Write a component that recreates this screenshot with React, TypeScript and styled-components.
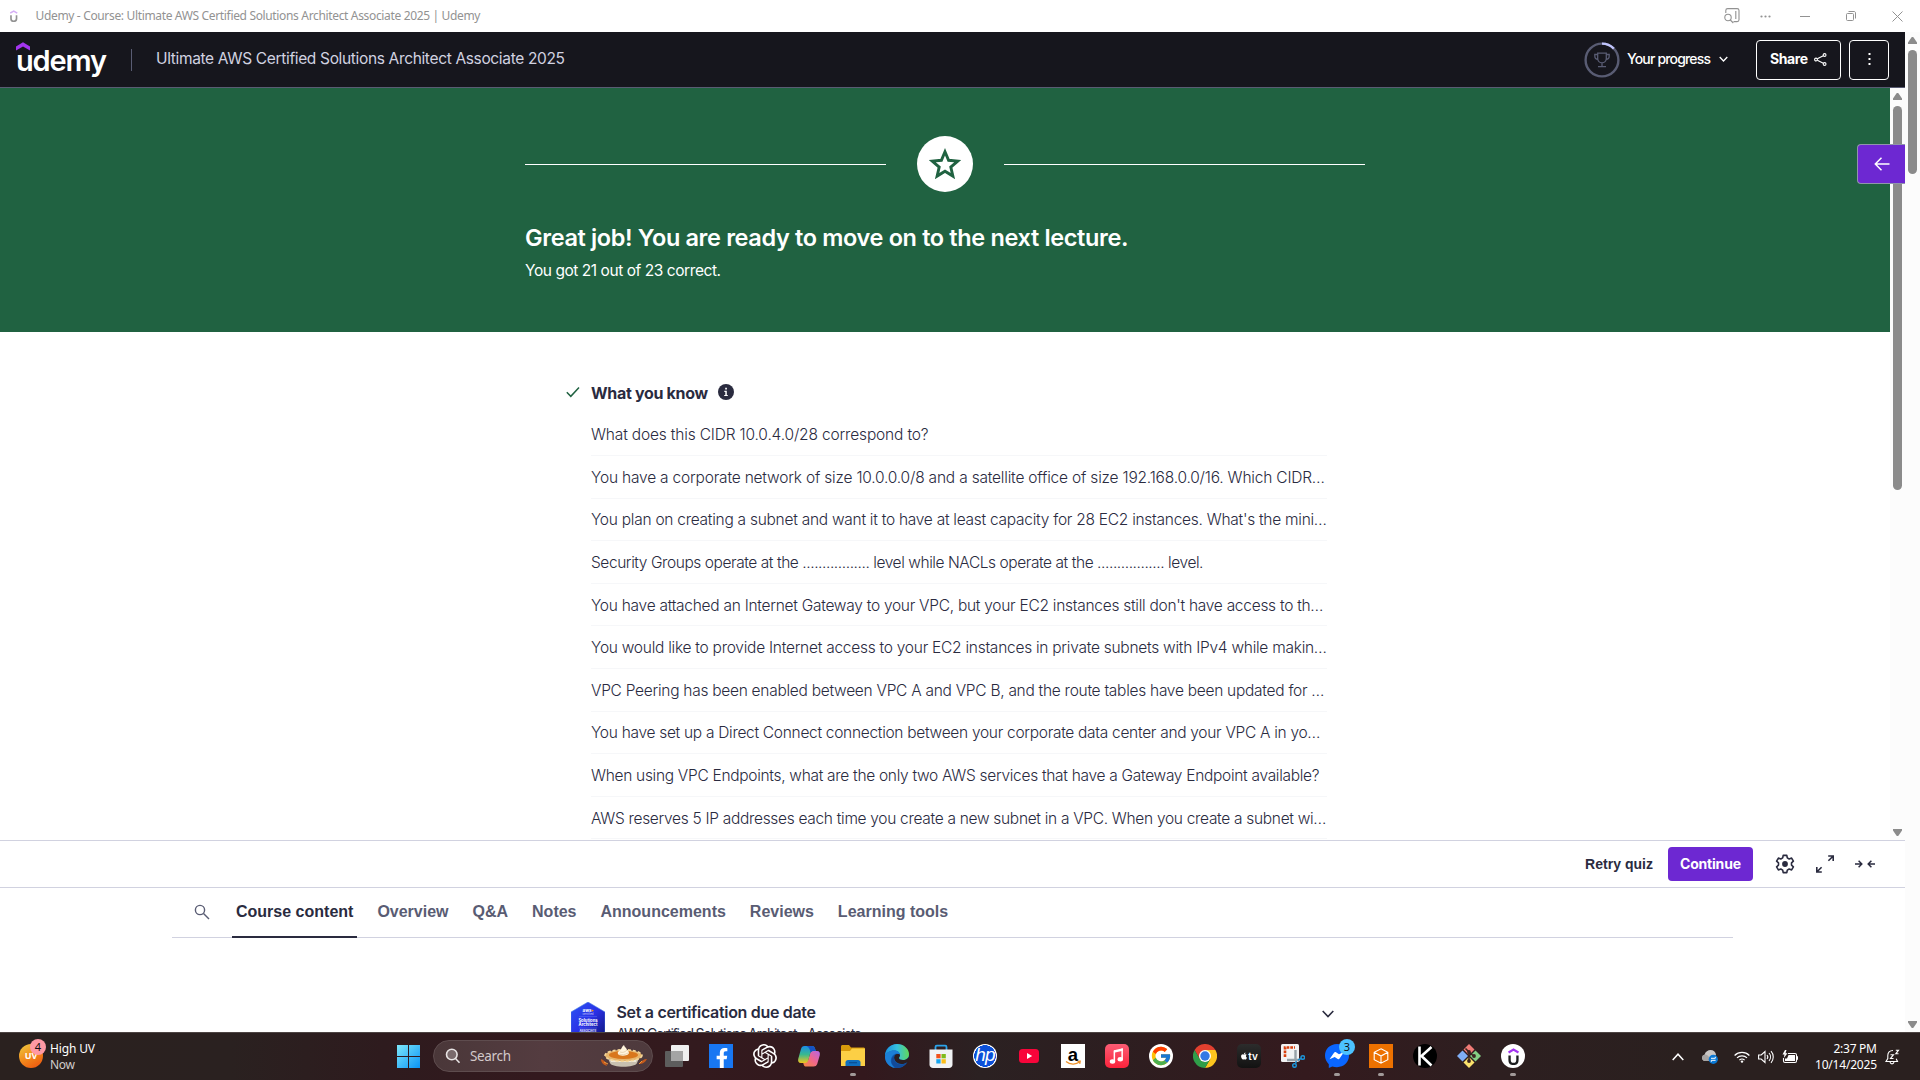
import React, { useLayoutEffect, useRef, useState } from "react";
import styled, { createGlobalStyle } from "styled-components";
import { SiOpenai } from "react-icons/si";
import { FcGoogle } from "react-icons/fc";
import { FaApple, FaFacebookF } from "react-icons/fa";

const ui = `Inter, "Liberation Sans", sans-serif`;
const arial = `"Liberation Sans", Arial, sans-serif`;
const system = `"Noto Sans", "Open Sans", sans-serif`;

const GlobalStyle = createGlobalStyle`
  *, *::before, *::after { box-sizing: border-box; }
  html, body { margin: 0; padding: 0; background: #fff; overflow: hidden; }
  body { font-family: ${ui}; color: #2a2b3f; }
  svg { display: block; flex: none; }
`;

/* ---------- text with an exact measure ---------- */

const Measure = styled.span<{ $w: number }>`
  display: block;
  flex: none;
  width: ${(p) => p.$w}px;
  white-space: nowrap;
`;

function Fit({ w, children }: { w: number; children: string }) {
  const ref = useRef<HTMLSpanElement>(null);
  const [spacing, setSpacing] = useState(0);
  useLayoutEffect(() => {
    if (!ref.current) return;
    const natural = ref.current.getBoundingClientRect().width;
    setSpacing((w - natural) / (children.length - 1));
  }, [w, children]);
  return (
    <Measure $w={w}>
      <span ref={ref} style={{ letterSpacing: `${spacing}px` }}>
        {children}
      </span>
    </Measure>
  );
}

/* ---------- frame ---------- */

const Desktop = styled.div`
  width: 1920px;
  height: 1080px;
  display: flex;
  flex-direction: column;
  overflow: hidden;
  background: #fff;
`;

const TitleBar = styled.div`
  height: 32px;
  flex: none;
  display: flex;
  align-items: center;
  padding: 0 17px 0 10px;
  color: #929292;
  font: 400 12px/16px ${system};
`;
const WindowTitle = styled.div`
  margin-left: 18px;
  flex: 1;
`;
const WindowButtons = styled.div`
  display: flex;
  align-items: center;
`;
const WindowButton = styled.div<{ $gap: number }>`
  margin-left: ${(p) => p.$gap}px;
`;

const Browser = styled.div`
  height: 1000px;
  flex: none;
  display: flex;
`;
const Page = styled.div`
  width: 1905px;
  height: 1000px;
  display: flex;
  flex-direction: column;
  position: relative;
  overflow: hidden;
`;

const Scrollbar = styled.div`
  width: 15px;
  flex: none;
  height: 100%;
  background: #fcfcfc;
  display: flex;
  flex-direction: column;
  align-items: center;
  padding: 5px 0 4px;
`;
const Thumb = styled.div<{ $h: number }>`
  width: 9px;
  height: ${(p) => p.$h}px;
  margin-top: 6px;
  border-radius: 5px;
  background: #8b8b8b;
`;
const Spacer = styled.div`
  flex: 1;
`;

/* ---------- course header ---------- */

const Header = styled.header`
  height: 56px;
  flex: none;
  background: #16161d;
  border-bottom: 1px solid #595c73;
  display: flex;
  align-items: center;
  padding: 0 16px;
`;
const Logo = styled.div`
  width: 91px;
  height: 37px;
  margin-top: 1px;
  display: flex;
  flex-direction: column;
  color: #fff;
`;
const Wordmark = styled.div`
  margin-top: -7px;
  font: 600 29px/34px ${ui};
`;
const Divider = styled.div`
  width: 1px;
  height: 22px;
  margin: 0 24px 0 24px;
  background: #595c73;
`;
const CourseTitle = styled.div`
  flex: 1;
  margin-top: -1px;
  font: 400 15.5px/24px ${ui};
  color: #d1d2e0;
`;
const Progress = styled.div`
  display: flex;
  align-items: center;
  color: #fff;
  font: 500 14px/20px ${ui};
  margin-right: 28px;
`;
const ProgressLabel = styled.div`
  margin: -1px 8px 0 7px;
`;
const HeaderButton = styled.div<{ $w: number }>`
  width: ${(p) => p.$w}px;
  height: 40px;
  border: 1px solid #fff;
  border-radius: 4px;
  display: flex;
  align-items: center;
  justify-content: center;
  gap: 6px;
  color: #fff;
  font: 700 14px/20px ${ui};
  margin-right: 8px;
  padding-bottom: 1px;
  &:last-child { margin-right: 0; }
`;

/* ---------- quiz result ---------- */

const QuizArea = styled.div`
  height: 752px;
  flex: none;
  display: flex;
`;
const QuizScroll = styled.div`
  width: 1890px;
  overflow: hidden;
`;
const Banner = styled.div`
  height: 244px;
  background: #206241;
  color: #fff;
  padding: 48px 525px 0;
`;
const StarRow = styled.div`
  display: flex;
  align-items: center;
  justify-content: space-between;
  height: 56px;
`;
const Rule = styled.div`
  width: 361px;
  height: 1px;
  background: #fff;
`;
const StarDisc = styled.div`
  width: 56px;
  height: 56px;
  border-radius: 50%;
  background: #fff;
  display: grid;
  place-items: center;
`;
const BannerTitle = styled.h2`
  margin: 30px 0 0;
  font: 600 23.5px/32px ${ui};
`;
const BannerText = styled.p`
  margin: 4px 0 0;
  font: 400 15.5px/26px ${ui};
`;
const Known = styled.section`
  padding: 47px 0 0 566px;
`;
const KnownHead = styled.div`
  display: flex;
  align-items: center;
  height: 26px;
  font: 700 16px/26px ${ui};
`;
const KnownLabel = styled.div`
  margin: 1px 10px 0 11px;
`;
const QuestionList = styled.ul`
  list-style: none;
  margin: 8.4px 0 0 25px;
  padding: 0;
  width: 736px;
`;
const Question = styled.li`
  height: 42.6px;
  padding: 8.8px 0 0;
  border-bottom: 1px solid #f6f7f9;
  font: 300 15.5px/25.6px ${ui};
`;

const DrawerButton = styled.div`
  position: absolute;
  right: 0;
  top: 112px;
  width: 48px;
  height: 40px;
  background: #6d28d2;
  border: 1px solid #9194ac;
  border-right: 0;
  border-radius: 4px 0 0 4px;
  display: grid;
  place-items: center;
`;

/* ---------- control bar and tabs ---------- */

const ControlBar = styled.div`
  height: 48px;
  flex: none;
  border-top: 1px solid #d1d2e0;
  border-bottom: 1px solid #d1d2e0;
  display: flex;
  align-items: center;
  justify-content: flex-end;
  padding-right: 30px;
`;
const Retry = styled.div`
  font: 700 14px/20px ${arial};
  margin-right: 15px;
`;
const ContinueButton = styled.div`
  width: 85px;
  height: 34px;
  border-radius: 4px;
  background: #6d28d2;
  color: #fff;
  display: flex;
  align-items: center;
  justify-content: center;
  font: 700 14px/20px ${ui};
  margin-right: 22px;
`;
const ControlIcon = styled.div`
  width: 20px;
  margin-right: 20px;
  &:last-child { margin-right: 0; }
`;

const TabBar = styled.nav`
  margin: 0 172px;
  height: 50px;
  flex: none;
  border-bottom: 1px solid #d1d2e0;
  display: flex;
  padding-left: 22px;
  font: 700 16px/24px ${arial};
`;
const TabSearch = styled.div`
  width: 38px;
  padding-top: 16px;
`;
const Tab = styled.div<{ $active?: boolean }>`
  height: 50px;
  padding: 12px 4px 0;
  margin-right: 16px;
  color: ${(p) => (p.$active ? "#2a2b3f" : "#595c73")};
  border-bottom: 2px solid ${(p) => (p.$active ? "#2a2b3f" : "transparent")};
`;

const CertRow = styled.div`
  margin: 64px 0 0 571px;
  width: 763px;
  display: flex;
`;
const CertText = styled.div`
  margin-left: 11.5px;
  flex: 1;
`;
const CertTitle = styled.div`
  margin-top: -1px;
  font: 600 16px/22px ${ui};
`;
const CertSub = styled.div`
  margin-top: 1px;
  font: 400 14px/20px ${ui};
`;
const CertChevron = styled.div`
  padding-top: 8px;
`;

/* ---------- taskbar ---------- */

const Taskbar = styled.footer`
  height: 48px;
  flex: none;
  border-top: 1px solid #4d4443;
  background: linear-gradient(90deg, #2a211f 0%, #2a2120 12%, #2e1b1e 20%, #33191e 28%, #331a1e 36%, #33181d 45%, #2b2122 51%, #2d1e20 58%, #341a1e 68%, #2d1f20 78%, #2a201f 88%, #2a201f 100%);
  display: flex;
  align-items: center;
  color: #fff;
  font: 400 12px/16px ${system};
`;
const Weather = styled.div`
  width: 397px;
  padding-left: 19px;
  display: flex;
  align-items: center;
`;
const WeatherText = styled.div`
  margin-left: 3px;
`;
const Dim = styled.div`
  color: #d0cccb;
`;
const SearchPill = styled.div`
  width: 220px;
  height: 32px;
  margin: -1px 2px 0 13px;
  border-radius: 16px;
  border: 1px solid #5e4c4e;
  background: linear-gradient(90deg, #4a3739, #543c40 50%, #4e3a3d);
  display: flex;
  align-items: center;
  padding: 0 5px 0 11px;
  font-size: 13.5px;
  color: #d3c9ca;
`;
const SearchLabel = styled.div`
  margin-left: 9px;
  flex: 1;
`;
const Apps = styled.div`
  display: flex;
`;
const AppCell = styled.div<{ $open?: boolean }>`
  width: 44px;
  height: 47px;
  display: flex;
  flex-direction: column;
  align-items: center;
  padding-top: 11px;
  &::after {
    content: "";
    width: 6px;
    height: 3px;
    margin-top: 5px;
    border-radius: 2px;
    background: ${(p) => (p.$open ? "#a19a99" : "transparent")};
  }
`;
const Tile = styled.div<{ $bg: string; $r?: number }>`
  position: relative;
  width: 24px;
  height: 24px;
  border-radius: ${(p) => p.$r ?? 0}px;
  background: ${(p) => p.$bg};
  display: flex;
  align-items: center;
  justify-content: center;
  color: #fff;
`;
const FacebookGlyph = styled(FaFacebookF)`
  margin: 4px 0 0 2px;
`;
const HpText = styled.span`
  font: italic 400 19px/22px ${arial};
  letter-spacing: -0.8px;
  margin-top: -3px;
`;
const TvText = styled.span`
  font: 600 10px/12px ${ui};
`;
const Badge = styled.div`
  position: absolute;
  left: 14px;
  top: -5px;
  width: 16px;
  height: 16px;
  border-radius: 50%;
  background: #4cc2ff;
  color: #111;
  text-align: center;
  font: 400 11px/16px ${system};
`;
const UvIcon = styled.div`
  position: relative;
  width: 28px;
  height: 24px;
  margin-top: -1px;
`;
const UvDisc = styled.div`
  width: 24px;
  height: 24px;
  border-radius: 50%;
  background: linear-gradient(150deg, #eebf3a 10%, #f28a1c 50%, #ee5a10 90%);
  font: 700 9px/24px ${system};
  text-align: center;
`;
const UvBadge = styled(Badge)`
  left: 11px;
  background: #ff99a4;
`;
const Tray = styled.div`
  flex: 1;
  display: flex;
  align-items: center;
  justify-content: flex-end;
  padding-right: 20px;
`;
const TrayItem = styled.div<{ $gap: number }>`
  margin-right: ${(p) => p.$gap}px;
`;
const Clock = styled.div`
  display: flex;
  flex-direction: column;
  align-items: flex-end;
  margin: 0 8px 0 17px;
`;

/* ---------- drawings ---------- */

const Triangle = ({ down = false }: { down?: boolean }) => (
  <svg width="9" height="7" viewBox="0 0 9 7">
    <path d={down ? "M0 0h9v1.5L5.8 6.3a1.5 1.5 0 0 1-2.6 0L0 1.5z" : "M0 7h9V5.5L5.8.7a1.5 1.5 0 0 0-2.6 0L0 5.5z"} fill="#8b8b8b" />
  </svg>
);

const Chevron = ({ w = 10, color = "#fff", up = false, sw = 1.3 }: { w?: number; color?: string; up?: boolean; sw?: number }) => (
  <svg width={w} height={w / 2 + 2} viewBox={`0 0 ${w} ${w / 2 + 2}`} fill="none" stroke={color} strokeWidth={sw}>
    <path d={up ? `M.7 ${w / 2 + 1}L${w / 2} 1.2l${w / 2 - 0.7} ${w / 2 - 0.2}` : `M.7 1l${w / 2 - 0.7} ${w / 2 - 0.5}L${w - 0.7} 1`} />
  </svg>
);

const ProgressRing = () => (
  <svg width="36" height="36" viewBox="0 0 36 36" fill="none">
    <circle cx="18" cy="18" r="16.4" stroke="#595c73" strokeWidth="2.4" />
    <path d="M18 1.6A16.4 16.4 0 0 1 29.8 6.6" stroke="#c0c4fc" strokeWidth="2.4" />
    <g stroke="#595c73" strokeWidth="1.3">
      <path d="M13.7 11.2h8.6v5.3a4.3 4.3 0 0 1-8.6 0zM13.7 12.5h-2.9v1.4c0 2 1.2 3.3 3.3 3.6M22.3 12.5h2.9v1.4c0 2-1.2 3.3-3.3 3.6M18 21v3.6M14 24.6h8" />
    </g>
  </svg>
);

const ShareIcon = () => (
  <svg width="13" height="13" viewBox="0 0 13 13" fill="none" stroke="#fff" strokeWidth="1.1">
    <circle cx="2" cy="6.5" r="1.4" />
    <circle cx="10.6" cy="2" r="1.4" />
    <circle cx="10.6" cy="11" r="1.4" />
    <path d="M3.3 5.8l6-3.1M3.3 7.2l6 3.1" />
  </svg>
);

const Gear = () => (
  <svg width="20" height="20" viewBox="0 0 20 20" fill="none" stroke="#2a2b3f" strokeWidth="1.6" strokeLinejoin="round">
    <path d="M8.2 1.4h3.6l.5 2.5 1.9 1.1 2.4-.9 1.8 3.1-1.9 1.7v2.2l1.9 1.7-1.8 3.1-2.4-.9-1.9 1.1-.5 2.5H8.2l-.5-2.5L5.8 15l-2.4.9-1.8-3.1 1.9-1.7V8.9L1.6 7.2l1.8-3.1 2.4.9 1.9-1.1z" />
    <circle cx="10" cy="10" r="2.9" fill="#2a2b3f" stroke="none" />
  </svg>
);
const Expand = () => (
  <svg width="20" height="20" viewBox="0 0 20 20" fill="none" stroke="#2a2b3f" strokeWidth="1.6">
    <path d="M13.2 2h5v5M18 2.2l-4.6 4.6M1.8 13v5h5M2 17.8l4.6-4.6" />
  </svg>
);
const Collapse = () => (
  <svg width="20" height="20" viewBox="0 0 20 20" fill="none" stroke="#2a2b3f" strokeWidth="1.5">
    <path d="M0 10h6.6M3.6 6.8L6.8 10l-3.2 3.2M20 10h-6.6M16.4 6.8L13.2 10l3.2 3.2" />
  </svg>
);

const CertBadge = () => (
  <svg width="34" height="38" viewBox="0 0 34 38">
    <defs>
      <linearGradient id="cert" x1="0" y1="0" x2="1" y2="1">
        <stop offset="0" stopColor="#2b56f5" />
        <stop offset=".5" stopColor="#2a30e6" />
        <stop offset="1" stopColor="#0d1370" />
      </linearGradient>
    </defs>
    <path d="M17 0l17 10v20L17 38 0 30V10z" fill="url(#cert)" stroke="#4b7fe0" strokeWidth=".6" />
    <g fill="#fff" fontFamily="Inter, sans-serif" textAnchor="middle">
      <text x="16" y="10" fontSize="4.5" fontWeight="700">aws</text>
      <text x="17" y="13.4" fontSize="2.8" opacity=".7">certified</text>
      <text x="17" y="19.8" fontSize="4.2" fontWeight="700">Solutions</text>
      <text x="17" y="24" fontSize="4.2" fontWeight="700">Architect</text>
      <text x="17" y="30.2" fontSize="3" fontWeight="600">ASSOCIATE</text>
    </g>
    <path d="M8 14.6h18M8 26h18" stroke="#6f86ff" strokeWidth=".4" />
    <circle cx="21.6" cy="8.6" r=".9" fill="#f90" />
  </svg>
);

const WindowsLogo = () => (
  <svg width="23" height="23" viewBox="0 0 23 23">
    <defs>
      <linearGradient id="win" x1="0" y1="0" x2="1" y2="1">
        <stop offset="0" stopColor="#7de8fb" />
        <stop offset="1" stopColor="#0a93f5" />
      </linearGradient>
    </defs>
    <path d="M0 0h11v11H0zM12 0h11v11H12zM0 12h11v11H0zM12 12h11v11H12z" fill="url(#win)" />
  </svg>
);

const Pie = () => (
  <svg width="47" height="23" viewBox="0 0 47 23">
    <path d="M1 14c3 1 5 3 6 7-3-1-6-3-6-7zM47 14c-3 0-6 2-8 5 3 0 6-1 8-5z" fill="#c45a1c" />
    <path d="M4 17l4 2M42 16l-3 3" stroke="#f19a3c" />
    <path d="M7 11h33l-3 7c-2 5-25 5-27 0z" fill="#c8c0b0" />
    <path d="M10 14h27l-1 3H11z" fill="#efe8d6" />
    <ellipse cx="23.5" cy="10.5" rx="18.5" ry="5.8" fill="#e6b56c" />
    <ellipse cx="23.5" cy="10.5" rx="18.5" ry="5.8" fill="none" stroke="#f6d79a" strokeWidth="1.6" strokeDasharray="3 2" />
    <ellipse cx="23.5" cy="10" rx="14.5" ry="4" fill="#d9771c" />
    <path d="M18 9c-1-3 2-3 3-5 1-1 1-3 3-4 0 2 3 3 3 5 2 1 3 4 0 5-3 1-8 1-9-1z" fill="#fff4dc" />
    <path d="M20 7c3 1 5 0 7-2M19 9c3 1 6 1 9-1" stroke="#dfc7a0" strokeWidth=".7" fill="none" />
  </svg>
);

const TaskView = () => (
  <svg width="24" height="24" viewBox="0 0 24 24">
    <rect x="6" y="1" width="18" height="16" rx="1" fill="#efefef" />
    <rect x="0" y="7" width="18" height="16" rx="1" fill="#5d5d5d" />
    <path d="M6 7h12v10H6z" fill="#a4a4a4" />
  </svg>
);

const Copilot = () => (
  <svg width="24" height="24" viewBox="0 0 24 24">
    <defs>
      <linearGradient id="cpA" x1="0" y1="0" x2="0" y2="1">
        <stop offset="0" stopColor="#1a8de8" />
        <stop offset=".5" stopColor="#38b98f" />
        <stop offset="1" stopColor="#f2c51c" />
      </linearGradient>
      <linearGradient id="cpB" x1="1" y1="0" x2="0" y2="1">
        <stop offset="0" stopColor="#b565e8" />
        <stop offset=".5" stopColor="#f0668c" />
        <stop offset="1" stopColor="#f58b3c" />
      </linearGradient>
    </defs>
    <path d="M16.5 22.500h-7c-2 0-2.600-1-3-2.600L6 18h2c2 0 3-1 3.500-3l1.600-5.500c.6-2 1.500-2.500 3.500-2.500H20c2.500 0 3.400 2 2.700 4.500l-2.500 8.500c-.7 1.700-1.700 2.500-3.700 2.500z" fill="url(#cpB)" />
    <path d="M7.500 2h7.500c2 0 2.500 1 3 2.600l.8 2.400h-2.300c-2 0-3 1-3.500 3l-1.600 6c-.6 2-1.500 3-3.500 3H4c-2.500 0-3.400-2-2.700-4.500l2.700-9.500C4.600 3 5.500 2 7.500 2z" fill="url(#cpA)" />
    <path d="M9.500 2H15c2 0 2.500 1 3 2.600l.8 2.400h-2.300c-1.500 0-2.500.6-3 1.500-.5-3-1.500-5.500-4-6.500z" fill="#1552c4" />
  </svg>
);

const Folder = () => (
  <svg width="24" height="24" viewBox="0 0 24 24">
    <path d="M0 2.500C0 1.700.6 1 1.500 1H8l2 2.500H22.500c.8 0 1.500.6 1.500 1.500v4H0z" fill="#d99a0b" />
    <path d="M0 7h9l2-2.500h13V22H0z" fill="#fccf45" />
    <path d="M4.500 22v-3.500c0-1.500 1-2.500 2.500-2.500h10c1.500 0 2.500 1 2.500 2.500V22z" fill="#0f6fc0" />
    <path d="M8 18.700h8" stroke="#0a4f94" strokeWidth="1.200" />
  </svg>
);

const Edge = () => (
  <svg width="24" height="24" viewBox="0 0 24 24">
    <defs>
      <linearGradient id="edA" x1="0" y1=".3" x2="1" y2=".3">
        <stop offset="0" stopColor="#1b8fdc" />
        <stop offset=".5" stopColor="#35c1e0" />
        <stop offset="1" stopColor="#62d957" />
      </linearGradient>
    </defs>
    <circle cx="12" cy="12" r="12" fill="#0f5fb4" />
    <path d="M0 12C0 5 5.500 0 12 0c7 0 12 5 12 10 0 4-3 6-6 6s-4-1-4-2 1-1.500 1-3c0-2.500-2.500-4.500-6-4.500C4.500 6.500 1 9 0 12z" fill="url(#edA)" />
    <path d="M9 6.500C4 6.500 0 9.500 0 13c0 5 4 10 10 11-4-3-5-7-3.500-10.500C7.500 11 10 9.500 12 9.500c1.500 0 3 .8 3 1.500 0-2.500-2.500-4.500-6-4.500z" fill="#1c7fd6" />
    <path d="M9.500 11.500C8 16 12 20 16.500 20c2.500 0 4-.5 6-2l.5.2c.2 0 .4-.3 1-.2v-5c-2 2.600-4 3-6 3-3 0-4-1-4-2s1-1.500 1-3c0-1-3.500-2-5.500.5z" fill="#2b1e20" />
    <path d="M9.500 11.500C7.500 16 11 20.500 16 20.500c2.500 0 4-.5 5.500-1.700C19.500 22 16 24 12 24c-4-1-6-5-5.500-8 .2-2 1.500-3.700 3-4.500z" fill="#124a99" />
  </svg>
);

const Store = () => (
  <svg width="24" height="24" viewBox="0 0 24 24">
    <path d="M6.500 6V3c0-.8.500-1.300 1.300-1.300h8.400c.8 0 1.300.5 1.300 1.300v3" fill="none" stroke="#2ba3ea" strokeWidth="1.800" />
    <path d="M.5 5.500h23v15c0 2-1.500 3.500-3.500 3.500H4c-2 0-3.500-1.500-3.500-3.500z" fill="#f1f2f4" />
    <path d="M7.300 10h4.300v4.300H7.300z" fill="#f1511b" />
    <path d="M12.500 10h4.300v4.300h-4.300z" fill="#7fbb1c" />
    <path d="M7.300 15.200h4.300v4.300H7.300z" fill="#16a5ef" />
    <path d="M12.500 15.200h4.300v4.300h-4.300z" fill="#fbbd1a" />
  </svg>
);

const YouTube = () => (
  <svg width="24" height="24" viewBox="0 0 24 24">
    <rect x="2" y="5" width="20" height="14" rx="3.500" fill="#f8053a" />
    <path d="M10 9l5.200 3-5.200 3z" fill="#fff" />
  </svg>
);

const Amazon = () => (
  <svg width="24" height="24" viewBox="0 0 24 24">
    <text x="12" y="16.500" textAnchor="middle" fontFamily="Liberation Sans, sans-serif" fontWeight="700" fontSize="18.500" fill="#000">a</text>
    <path d="M5 17.500c4 3.300 10 3.300 13.500.6M16.500 17.300l2.700-.1-.5 2.700" fill="none" stroke="#f0922a" strokeWidth="1.300" />
  </svg>
);

const Note = () => (
  <svg width="24" height="24" viewBox="0 0 24 24" fill="#fff">
    <path d="M9 6.200l8.800-2v2.600L9 8.800z" />
    <path d="M8.600 6.400h1.500v11H8.600zM16.400 4.500h1.500V15h-1.500z" />
    <ellipse cx="7.500" cy="17.500" rx="2.700" ry="2.200" />
    <ellipse cx="15.300" cy="15.300" rx="2.700" ry="2.200" />
  </svg>
);

const Chrome = () => (
  <svg width="24" height="24" viewBox="0 0 24 24">
    <path d="M12 6h10.400A12 12 0 0 1 12 24l5.200-9z" fill="#fcc51e" />
    <path d="M1.600 6A12 12 0 0 1 22.400 6H12l-5.200 9z" fill="#e2402f" />
    <path d="M12 24A12 12 0 0 1 1.600 6l5.200 9 4 3 6.400-3z" fill="#2f9e49" />
    <circle cx="12" cy="12" r="6" fill="#fff" />
    <circle cx="12" cy="12" r="4.700" fill="#3379e4" />
  </svg>
);

const Snip = () => (
  <svg width="24" height="24" viewBox="0 0 24 24">
    <rect x="0" y="0" width="18" height="18" rx="1.500" fill="#f2f3f4" />
    <path d="M4 13V3.500h10" fill="none" stroke="#d8400f" strokeWidth="2.600" strokeDasharray="2.700 1" />
    <path d="M14.500 6v11M6 16h13" stroke="#98a2a8" strokeWidth="2.400" />
    <circle cx="21.800" cy="13.500" r="1.800" fill="none" stroke="#1c93d6" strokeWidth="1.500" />
    <circle cx="13.500" cy="21.500" r="1.800" fill="none" stroke="#1c93d6" strokeWidth="1.500" />
    <path d="M20 14.500l-3 1.500M14.500 19.700l.8-2.700" stroke="#1c93d6" strokeWidth="1.500" />
  </svg>
);

const Messenger = () => (
  <svg width="24" height="24" viewBox="0 0 24 24">
    <path d="M12 0C5 0 0 5 0 11.600c0 3.500 1.400 6.500 3.800 8.600V24l3.500-1.600c1.400.5 3 .8 4.700.8 7 0 12-5 12-11.600S19 0 12 0z" fill="#0a66ff" />
    <path d="M4.500 15.200l4.700-6.700c.5-.6 1.200-.7 1.800-.3l3 2.100 5-2.300-4.400 6.600c-.5.6-1.300.8-1.900.4l-3-2z" fill="#fff" />
  </svg>
);

const Cube = () => (
  <svg width="16" height="16" viewBox="0 0 16 16" fill="none" stroke="#fff" strokeWidth="1.100">
    <path d="M8 .8l6.800 3.500v7.400L8 15.200l-6.800-3.500V4.300zM1.200 4.300L8 8l6.800-3.700M8 8v7.200" />
  </svg>
);

const KApp = () => (
  <svg width="24" height="24" viewBox="0 0 24 24">
    <circle cx="12" cy="12" r="12" fill="#000" />
    <path d="M6.500 2.500v19M18.500 3L8.500 12l10 9.500" fill="none" stroke="#fff" strokeWidth="2.600" />
  </svg>
);

const Git = () => (
  <svg width="24" height="24" viewBox="0 0 24 24">
    <path d="M12 0l5.500 5.500L12 11 6.500 5.500z" fill="#f07b76" />
    <path d="M5.500 6.500L11 12l-5.500 5.500L0 12z" fill="#80aef5" />
    <path d="M18.500 6.500L24 12l-5.500 5.500L13 12z" fill="#84cf84" />
    <path d="M12 13l5.500 5.500L12 24l-5.500-5.500z" fill="#fbe26c" />
    <path d="M8.500 4.500l3.500 3.500v9M12 8l4.500 4" stroke="#3a2420" strokeWidth="1.600" fill="none" />
    <circle cx="12" cy="8" r="1.900" fill="#3a2420" />
    <circle cx="12" cy="17" r="1.900" fill="#3a2420" />
    <circle cx="17" cy="12" r="1.900" fill="#3a2420" />
  </svg>
);

const UdemyMark = ({ w, h, u, hat }: { w: number; h: number; u: string; hat: string }) => (
  <svg width={w} height={h} viewBox="0 0 10 16" fill="none" strokeWidth="2.200">
    <path d="M.3 4.200L5 1.500l4.700 2.700" stroke={hat} />
    <path d="M1.300 7v4.200C1.300 13.500 2.700 15 5 15s3.700-1.500 3.700-3.800V7" stroke={u} />
  </svg>
);

const Bell = () => (
  <svg width="15" height="16" viewBox="0 0 15 16" fill="none" stroke="#fff" strokeWidth="1.100">
    <path d="M8 1.500C4.500 1.500 2.800 3.500 2.800 6.500v3L1 12.500h11.500l-1.300-2.700M5 13c.3 1.300 1 1.900 2 1.900s1.800-.6 2-1.900" />
    <path d="M5.500 5.700h3L5.500 9.500h3M10.800 1.200h2.700L10.800 4.800h2.700" />
  </svg>
);

/* ---------- data ---------- */

const questions: [string, number][] = [
  ["What does this CIDR 10.0.4.0/28 correspond to?", 337.5],
  ["You have a corporate network of size 10.0.0.0/8 and a satellite office of size 192.168.0.0/16. Which CIDR…", 734],
  ["You plan on creating a subnet and want it to have at least capacity for 28 EC2 instances. What's the mini…", 736],
  ["Security Groups operate at the ................. level while NACLs operate at the ................. level.", 612.5],
  ["You have attached an Internet Gateway to your VPC, but your EC2 instances still don't have access to th…", 732.5],
  ["You would like to provide Internet access to your EC2 instances in private subnets with IPv4 while makin…", 736],
  ["VPC Peering has been enabled between VPC A and VPC B, and the route tables have been updated for …", 733.5],
  ["You have set up a Direct Connect connection between your corporate data center and your VPC A in yo…", 729.5],
  ["When using VPC Endpoints, what are the only two AWS services that have a Gateway Endpoint available?", 728.5],
  ["AWS reserves 5 IP addresses each time you create a new subnet in a VPC. When you create a subnet wi…", 735.5],
];

const tabs: [string, number][] = [
  ["Course content", 117.4],
  ["Overview", 71.1],
  ["Q&A", 35.6],
  ["Notes", 44.4],
  ["Announcements", 125.4],
  ["Reviews", 64],
  ["Learning tools", 110.3],
];

export default function App() {
  return (
    <Desktop>
      <GlobalStyle />
      <TitleBar>
        <UdemyMark w={7.5} h={12} u="#929292" hat="#d5aef5" />
        <WindowTitle>
          <Fit w={445}>Udemy - Course: Ultimate AWS Certified Solutions Architect Associate 2025 | Udemy</Fit>
        </WindowTitle>
        <WindowButtons>
          <WindowButton $gap={0}>
            <svg width="16" height="16" viewBox="0 0 16 16" fill="none" stroke="#929292" strokeWidth="1.100">
              <path d="M1.800 5V2.500c0-1 .7-1.900 1.900-1.900h9.400c1.200 0 1.900.9 1.900 1.900v9.200c0 1.200-.8 1.900-1.900 1.900H9.500M11.800 3v8" />
              <circle cx="4" cy="9.500" r="3.200" />
              <path d="M6.300 12l3 3" />
            </svg>
          </WindowButton>
          <WindowButton $gap={20}>
            <svg width="11" height="3" viewBox="0 0 11 3" fill="#929292">
              <circle cx="1.500" cy="1.500" r="1.100" />
              <circle cx="5.500" cy="1.500" r="1.100" />
              <circle cx="9.500" cy="1.500" r="1.100" />
            </svg>
          </WindowButton>
          <WindowButton $gap={29}>
            <svg width="10" height="1"><rect width="10" height="1" fill="#929292" /></svg>
          </WindowButton>
          <WindowButton $gap={36}>
            <svg width="10" height="10" viewBox="0 0 10 10" fill="none" stroke="#929292">
              <rect x=".5" y="2.500" width="7" height="7" rx="1" />
              <path d="M2.500 .5H8c1 0 1.500.6 1.500 1.500v5.500" />
            </svg>
          </WindowButton>
          <WindowButton $gap={36}>
            <svg width="11" height="11" viewBox="0 0 11 11" stroke="#929292"><path d="M.5.5l10 10M10.500.5l-10 10" /></svg>
          </WindowButton>
        </WindowButtons>
      </TitleBar>

      <Browser>
        <Page>
          <Header>
            <Logo>
              <svg width="14" height="9" viewBox="0 0 14 9"><path d="M0 4.500L7 .3l7 4.200v4L7 4.500 0 8.500z" fill="#a435f0" /></svg>
              <Wordmark><Fit w={91}>udemy</Fit></Wordmark>
            </Logo>
            <Divider />
            <CourseTitle><Fit w={409}>Ultimate AWS Certified Solutions Architect Associate 2025</Fit></CourseTitle>
            <Progress>
              <ProgressRing />
              <ProgressLabel><Fit w={84}>Your progress</Fit></ProgressLabel>
              <Chevron w={9} />
            </Progress>
            <HeaderButton $w={85}><Fit w={38}>Share</Fit><ShareIcon /></HeaderButton>
            <HeaderButton $w={40}>
              <svg width="3" height="13" viewBox="0 0 3 13" fill="#fff"><path d="M.5 0h2v2h-2zM.5 5h2v2h-2zM.5 10h2v2h-2z" /></svg>
            </HeaderButton>
          </Header>

          <QuizArea>
            <QuizScroll>
              <Banner>
                <StarRow>
                  <Rule />
                  <StarDisc>
                    <svg width="32" height="32" viewBox="0 0 32 32" fill="none" stroke="#206241" strokeWidth="2.900">
                      <path d="M16 3.800l3.600 8.500 9.200.8-7 6 2.100 9-7.900-4.800-7.900 4.800 2.100-9-7-6 9.200-.8z" />
                    </svg>
                  </StarDisc>
                  <Rule />
                </StarRow>
                <BannerTitle><Fit w={603.5}>Great job! You are ready to move on to the next lecture.</Fit></BannerTitle>
                <BannerText><Fit w={196}>You got 21 out of 23 correct.</Fit></BannerText>
              </Banner>
              <Known>
                <KnownHead>
                  <svg width="14" height="12" viewBox="0 0 14 12" fill="none" stroke="#206241" strokeWidth="1.500"><path d="M.8 6.300l4 4L13 1.500" /></svg>
                  <KnownLabel><Fit w={117}>What you know</Fit></KnownLabel>
                  <svg width="16" height="16" viewBox="0 0 16 16"><circle cx="8" cy="8" r="8" fill="#2a2b3f" /><path d="M7.200 3.800h1.700v1.700H7.200zM6.300 6.700h2.500v4.200h1v1.200H6.200v-1.200h1.100V7.900h-1z" fill="#fff" /></svg>
                </KnownHead>
                <QuestionList>
                  {questions.map(([text, w]) => (
                    <Question key={text}><Fit w={w}>{text}</Fit></Question>
                  ))}
                </QuestionList>
              </Known>
            </QuizScroll>
            <Scrollbar><Triangle /><Thumb $h={384} /><Spacer /><Triangle down /></Scrollbar>
          </QuizArea>

          <DrawerButton>
            <svg width="16" height="14" viewBox="0 0 16 14" fill="none" stroke="#fff" strokeWidth="1.500"><path d="M15.500 7H1.500M7.500.8L1.300 7l6.200 6.200" /></svg>
          </DrawerButton>

          <ControlBar>
            <Retry><Fit w={68}>Retry quiz</Fit></Retry>
            <ContinueButton><Fit w={61}>Continue</Fit></ContinueButton>
            <ControlIcon><Gear /></ControlIcon>
            <ControlIcon><Expand /></ControlIcon>
            <ControlIcon><Collapse /></ControlIcon>
          </ControlBar>

          <TabBar>
            <TabSearch>
              <svg width="16" height="16" viewBox="0 0 16 16" fill="none" stroke="#595c73" strokeWidth="1.400"><circle cx="6" cy="6" r="4.600" /><path d="M9.500 9.500l5.500 5.500" /></svg>
            </TabSearch>
            {tabs.map(([label, w], i) => (
              <Tab key={label} $active={i === 0}><Fit w={w}>{label}</Fit></Tab>
            ))}
          </TabBar>

          <CertRow>
            <CertBadge />
            <CertText>
              <CertTitle><Fit w={199.5}>Set a certification due date</Fit></CertTitle>
              <CertSub><Fit w={245.5}>AWS Certified Solutions Architect – Associate</Fit></CertSub>
            </CertText>
            <CertChevron><Chevron w={12} color="#2a2b3f" sw={1.6} /></CertChevron>
          </CertRow>
        </Page>
        <Scrollbar><Triangle /><Thumb $h={124} /><Spacer /><Triangle down /></Scrollbar>
      </Browser>

      <Taskbar>
        <Weather>
          <UvIcon><UvDisc>UV</UvDisc><UvBadge>4</UvBadge></UvIcon>
          <WeatherText>
            <Fit w={45}>High UV</Fit>
            <Dim><Fit w={25}>Now</Fit></Dim>
          </WeatherText>
        </Weather>
        <WindowsLogo />
        <SearchPill>
          <svg width="16" height="16" viewBox="0 0 16 16" fill="none" stroke="#e8e4e4" strokeWidth="1.600"><circle cx="6.800" cy="6.500" r="5.300" fill="#7a6a6c" /><path d="M10.500 10.500l4 4.300" /></svg>
          <SearchLabel><Fit w={41}>Search</Fit></SearchLabel>
          <Pie />
        </SearchPill>
        <Apps>
          <AppCell><TaskView /></AppCell>
          <AppCell><Tile $bg="#1877f2"><FacebookGlyph size={20} /></Tile></AppCell>
          <AppCell><SiOpenai size={24} /></AppCell>
          <AppCell><Copilot /></AppCell>
          <AppCell $open><Folder /></AppCell>
          <AppCell><Edge /></AppCell>
          <AppCell><Store /></AppCell>
          <AppCell><Tile $bg="radial-gradient(circle, #0b50d8 10.6px, #fff 11px)" $r={12}><HpText>hp</HpText></Tile></AppCell>
          <AppCell><YouTube /></AppCell>
          <AppCell><Tile $bg="#fff"><Amazon /></Tile></AppCell>
          <AppCell><Tile $bg="linear-gradient(#fb5c74, #fa233b)" $r={5}><Note /></Tile></AppCell>
          <AppCell><Tile $bg="#fff" $r={12}><FcGoogle size={22} /></Tile></AppCell>
          <AppCell><Chrome /></AppCell>
          <AppCell><Tile $bg="linear-gradient(#2c2c2c, #121212)" $r={5}><FaApple size={8} /><TvText>tv</TvText></Tile></AppCell>
          <AppCell><Snip /></AppCell>
          <AppCell $open><Tile $bg="transparent"><Messenger /><Badge>3</Badge></Tile></AppCell>
          <AppCell $open><Tile $bg="#ed7100"><Cube /></Tile></AppCell>
          <AppCell><KApp /></AppCell>
          <AppCell><Git /></AppCell>
          <AppCell $open><Tile $bg="#fff" $r={12}><UdemyMark w={11} h={17} u="#1c1d1f" hat="#a435f0" /></Tile></AppCell>
        </Apps>
        <Tray>
          <TrayItem $gap={18}><Chevron w={12} up sw={1.5} /></TrayItem>
          <TrayItem $gap={16}>
            <svg width="16" height="15" viewBox="0 0 16 15">
              <path d="M3 12a3.200 3.200 0 0 1-.5-6.300C3.500 2.500 6 1 8.500 1c3 0 5 2 5.500 4.500L11 12z" fill="#c9c6c5" />
              <path d="M2.500 5.700C5 5 7.500 8 9 12H3a3.200 3.200 0 0 1-.5-6.300z" fill="#a7a4a3" />
              <circle cx="11.300" cy="10.300" r="4.600" fill="#0a78d4" />
              <path d="M9 9.300h4.300V7.800M13.600 11.300H9.300v1.500" stroke="#fff" fill="none" />
            </svg>
          </TrayItem>
          <TrayItem $gap={8}>
            <svg width="16" height="12" viewBox="0 0 16 12" fill="none" stroke="#fff" strokeWidth="1.200">
              <path d="M.6 4.500a10.500 10.500 0 0 1 14.800 0M3 6.900a7 7 0 0 1 10 0M5.400 9.100a3.700 3.700 0 0 1 5.200 0" />
              <circle cx="8" cy="10.600" r="1.200" fill="#fff" stroke="none" />
            </svg>
          </TrayItem>
          <TrayItem $gap={8}>
            <svg width="16" height="14" viewBox="0 0 16 14" fill="none" stroke="#fff" strokeWidth="1.100">
              <path d="M.6 5h2.600L7 1.500v11L3.200 9H.6zM9 5c1 1.200 1 2.800 0 4M11 3c2 2.300 2 5.700 0 8M13 1.200c3 3.300 3 8.300 0 11.600" />
            </svg>
          </TrayItem>
          <TrayItem $gap={0}>
            <svg width="16" height="14" viewBox="0 0 16 14">
              <path d="M6 3.500h7c1 0 1.500.5 1.500 1.500v6c0 1-.5 1.500-1.500 1.500H3c-1 0-1.500-.5-1.500-1.500V8" fill="none" stroke="#fff" strokeWidth="1.100" />
              <path d="M6.500 5H13v6H3V8.500h2zM15 6.300h1v3.400h-1z" fill="#fff" />
              <path d="M3 0L.5 4.500h2L1.800 8 5.500 3.200h-2L4.500 0z" fill="#fff" />
            </svg>
          </TrayItem>
          <Clock>
            <Fit w={43.5}>2:37 PM</Fit>
            <Fit w={62}>10/14/2025</Fit>
          </Clock>
          <Bell />
        </Tray>
      </Taskbar>
    </Desktop>
  );
}
